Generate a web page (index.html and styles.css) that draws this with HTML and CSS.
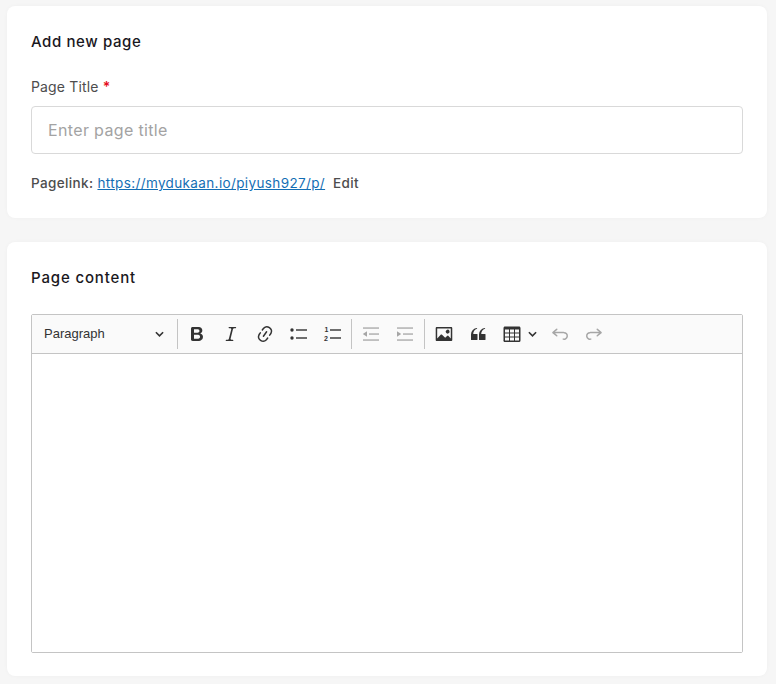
FILE: index.html
```html
<!DOCTYPE html>
<html lang="en">
<head>
  <meta charset="UTF-8">
  <title>Add new page</title>
  <link rel="stylesheet" href="styles.css">
</head>
<body>

  <section class="card card-page">
    <h2 class="card-title">Add new page</h2>
    <label class="field-label" for="page-title">Page Title <span class="required">*</span></label>
    <input class="text-input" id="page-title" type="text" placeholder="Enter page title">
    <p class="pagelink">
      <span>Pagelink:</span>
      <a href="#">https://mydukaan.io/piyush927/p/</a>
      <span class="edit">Edit</span>
    </p>
  </section>

  <section class="card card-content">
    <h2 class="card-title">Page content</h2>

    <div class="editor">
      <div class="toolbar">
        <div class="heading-select">
          <span class="heading-name">Paragraph</span>
          <svg class="chevron" viewBox="0 0 10 6"><path d="M1 1l4 4 4-4" fill="none" stroke="#333" stroke-width="1.8"/></svg>
        </div>
        <span class="sep"></span>

        <button class="tool">
          <svg viewBox="0 0 20 20"><path d="M10.187 17H5.773c-.637 0-1.092-.138-1.364-.415-.273-.277-.409-.718-.409-1.323V4.738c0-.617.14-1.062.419-1.332.279-.27.73-.406 1.354-.406h4.68c.69 0 1.288.041 1.793.124.506.083.96.242 1.36.478.341.197.644.447.906.75a3.262 3.262 0 0 1 .808 2.162c0 1.401-.722 2.426-2.167 3.075C15.05 10.175 16 11.315 16 13.01a3.756 3.756 0 0 1-2.296 3.504 6.1 6.1 0 0 1-1.517.377c-.571.073-1.238.11-2 .11zm-.217-6.217H7v4.087h3.069c1.977 0 2.965-.69 2.965-2.072 0-.707-.256-1.22-.768-1.537-.512-.319-1.277-.478-2.296-.478zM7 5.13v3.619h2.606c.729 0 1.292-.067 1.69-.2a1.6 1.6 0 0 0 .91-.765c.165-.267.247-.566.247-.897 0-.707-.26-1.176-.778-1.409-.519-.232-1.31-.348-2.375-.348H7z"/></svg>
        </button>
        <button class="tool">
          <svg viewBox="0 0 20 20"><path d="m9.586 14.633.021.004c-.036.335.095.655.393.962.082.083.173.15.274.201h1.474a.6.6 0 1 1 0 1.2H5.304a.6.6 0 0 1 0-1.2h1.15c.474-.07.809-.182 1.005-.334.157-.122.291-.32.404-.597l2.416-9.55a1.053 1.053 0 0 0-.281-.823 1.12 1.12 0 0 0-.442-.296H8.15a.6.6 0 0 1 0-1.2h6.443a.6.6 0 1 1 0 1.2h-1.195c-.376.056-.65.155-.823.296-.215.175-.423.439-.623.79l-2.366 9.347z"/></svg>
        </button>
        <button class="tool">
          <svg viewBox="0 0 20 20"><path d="m11.077 15 .991-1.416a.75.75 0 1 1 1.229.86l-1.148 1.64a.748.748 0 0 1-.217.206 5.251 5.251 0 0 1-8.503-5.955.741.741 0 0 1 .12-.274l1.147-1.639a.75.75 0 1 1 1.228.86L4.933 10.7l.006.003a3.75 3.75 0 0 0 6.132 4.294l.006.004zm5.494-5.335a.748.748 0 0 1-.12.274l-1.147 1.639a.75.75 0 1 1-1.228-.86l.86-1.23a3.75 3.75 0 0 0-6.144-4.301l-.86 1.229a.75.75 0 0 1-1.229-.86l1.148-1.64a.748.748 0 0 1 .217-.206 5.251 5.251 0 0 1 8.503 5.955zm-4.563-2.532a.75.75 0 0 1 .184 1.045l-3.155 4.505a.75.75 0 1 1-1.229-.86l3.155-4.506a.75.75 0 0 1 1.045-.184z"/></svg>
        </button>
        <button class="tool">
          <svg viewBox="0 0 20 20"><circle cx="3" cy="6" r="1.7"/><circle cx="3" cy="14" r="1.7"/><rect x="7" y="5.3" width="11" height="1.4"/><rect x="7" y="13.3" width="11" height="1.4"/></svg>
        </button>
        <button class="tool">
          <svg viewBox="0 0 20 20"><text class="num" x="1.4" y="8">1</text><text class="num" x="1" y="17">2</text><rect x="7" y="5.3" width="11" height="1.4"/><rect x="7" y="13.3" width="11" height="1.4"/></svg>
        </button>
        <span class="sep"></span>

        <button class="tool muted">
          <svg viewBox="0 0 20 20"><rect x="2" y="3.4" width="16" height="1.3"/><rect x="8" y="9.4" width="10" height="1.3"/><rect x="2" y="15.4" width="16" height="1.3"/><path d="M6 7.2v5.6L1.8 10z"/></svg>
        </button>
        <button class="tool muted">
          <svg viewBox="0 0 20 20"><rect x="2" y="3.4" width="16" height="1.3"/><rect x="8" y="9.4" width="10" height="1.3"/><rect x="2" y="15.4" width="16" height="1.3"/><path d="M2 7.2v5.6L6.2 10z"/></svg>
        </button>
        <span class="sep"></span>

        <button class="tool">
          <svg viewBox="0 0 20 20"><path d="M6.91 10.54c.26-.23.64-.21.88.03l3.36 3.14 2.23-2.06a.64.64 0 0 1 .87 0l2.52 2.97V4.5H3.2v10.12l3.71-4.08zm10.27-7.51c.6 0 1.09.47 1.09 1.05v11.84c0 .59-.49 1.06-1.09 1.06H2.79c-.6 0-1.09-.47-1.09-1.06V4.08c0-.58.49-1.05 1.1-1.05h14.38zm-5.22 5.56a1.96 1.96 0 1 1 3.4-1.96 1.96 1.96 0 0 1-3.4 1.96z"/></svg>
        </button>
        <button class="tool">
          <svg viewBox="0 0 20 20"><path d="M3 10.423a6.5 6.5 0 0 1 6.056-6.408l.038.67C6.448 5.423 5.354 7.663 5.22 10H9c.552 0 .5.432.5.986v4.511c0 .554-.448.503-1 .503h-5c-.552 0-.5-.449-.5-1.003v-4.574zm8 0a6.5 6.5 0 0 1 6.056-6.408l.038.67c-2.646.739-3.74 2.979-3.873 5.315H17c.552 0 .5.432.5.986v4.511c0 .554-.448.503-1 .503h-5c-.552 0-.5-.449-.5-1.003v-4.574z"/></svg>
        </button>
        <button class="tool tool-table">
          <svg viewBox="0 0 20 20"><path d="M3 5.5v3h4v-3H3zm0 4v3h4v-3H3zm0 4v3h4v-3H3zm5 3h4v-3H8v3zm5 0h4v-3h-4v3zm4-4v-3h-4v3h4zm0-4v-3h-4v3h4zm1.5 8a1.5 1.5 0 0 1-1.5 1.5H3A1.5 1.5 0 0 1 1.5 16V4c0-.828.672-1.5 1.5-1.5h14c.828 0 1.5.672 1.5 1.5v12zM8 5.5v3h4v-3H8zm0 4v3h4v-3H8z"/></svg>
          <svg class="chevron" viewBox="0 0 10 6"><path d="M1 1l4 4 4-4" fill="none" stroke="#333" stroke-width="1.8"/></svg>
        </button>
        <button class="tool muted">
          <svg viewBox="0 0 20 20"><path d="m5.042 9.367 2.189 1.837a.75.75 0 0 1-.965 1.149l-3.788-3.18a.747.747 0 0 1-.21-.284.75.75 0 0 1 .17-.945L6.23 4.762a.75.75 0 1 1 .964 1.15L4.863 7.866h8.917A.75.75 0 0 1 14 7.9a4 4 0 1 1-1.477 7.718l.344-1.489a2.5 2.5 0 1 0 1.094-4.73l.008-.032H5.042z"/></svg>
        </button>
        <button class="tool muted">
          <svg viewBox="0 0 20 20"><path d="m14.958 9.367-2.189 1.837a.75.75 0 0 0 .965 1.149l3.788-3.18a.747.747 0 0 0 .21-.284.75.75 0 0 0-.17-.945L13.77 4.762a.75.75 0 1 0-.964 1.15l2.331 1.955H6.22A.75.75 0 0 0 6 7.9a4 4 0 1 0 1.477 7.718l-.344-1.489A2.5 2.5 0 1 1 6.039 9.4l-.008-.032h8.927z"/></svg>
        </button>
      </div>
      <div class="editor-body"></div>
    </div>
  </section>

</body>
</html>
```

FILE: styles.css
```css
body {
  margin: 0;
  padding: 6px 9px 0 7px;
  height: 684px;
  box-sizing: border-box;
  overflow: hidden;
  background: #f6f6f6;
  font-family: "Inter", "Liberation Sans", sans-serif;
  color: #1a181e;
}

.card {
  background: #fff;
  border-radius: 8px;
  padding: 24px 24px 0;
  box-shadow: 0 0 4px rgba(0, 0, 0, 0.03);
}

.card-page {
  height: 212px;
  box-sizing: border-box;
  margin-bottom: 24px;
}

.card-content {
  height: 434px;
  box-sizing: border-box;
}

.card-title {
  margin: 0;
  font-size: 15px;
  line-height: 24px;
  font-weight: 500;
  letter-spacing: 0.6px;
  color: #1a181e;
}

.card-content .card-title {
  letter-spacing: 0.85px;
}

.field-label {
  display: block;
  margin-top: 23px;
  font-size: 14px;
  line-height: 20px;
  letter-spacing: 0.15px;
  color: #4d4d4d;
}

.required {
  color: #e50b20;
  font-weight: 600;
}

.text-input {
  display: block;
  width: 100%;
  height: 48px;
  box-sizing: border-box;
  margin-top: 9px;
  padding: 0 16px 1px;
  border: 1px solid #d9d9d9;
  border-radius: 4px;
  font-family: inherit;
  font-size: 16px;
  letter-spacing: 0.35px;
  color: #1a181e;
}

.text-input::placeholder {
  color: #a3a3a3;
}

.pagelink {
  margin: 19px 0 0;
  font-size: 13.5px;
  line-height: 20px;
  font-weight: 500;
  letter-spacing: 0.37px;
  color: #4d4d4d;
}

.pagelink a {
  color: #146eb4;
  font-weight: 400;
}

.pagelink .edit {
  margin-left: 4px;
}

.editor {
  margin-top: 24px;
  height: 339px;
  box-sizing: border-box;
  border: 1px solid #c4c4c4;
  border-radius: 2px;
  display: flex;
  flex-direction: column;
}

.toolbar {
  height: 39px;
  flex-shrink: 0;
  box-sizing: border-box;
  border-bottom: 1px solid #c4c4c4;
  background: #fafafa;
  display: flex;
  align-items: center;
}

.heading-select {
  width: 143px;
  box-sizing: border-box;
  padding: 0 11px 0 12px;
  display: flex;
  justify-content: space-between;
  align-items: center;
  font-family: "Liberation Sans", sans-serif;
  font-size: 13px;
  color: #333;
}

.heading-name {
  margin-top: -2px;
}

.sep {
  width: 1px;
  height: 30px;
  margin: 0 2px;
  flex-shrink: 0;
  background: #c4c4c4;
}

.tool {
  width: 33.9px;
  height: 30px;
  flex-shrink: 0;
  padding: 0;
  border: 0;
  background: none;
  display: flex;
  align-items: center;
  justify-content: center;
}

.tool svg {
  width: 20px;
  height: 20px;
  flex-shrink: 0;
  fill: #333;
}

.tool .num {
  font-family: "Liberation Sans", sans-serif;
  font-size: 7px;
  font-weight: 700;
}

.tool.muted svg {
  fill: #a6a6a6;
}

.tool-table {
  width: 48.5px;
  padding-left: 6.5px;
  gap: 6px;
  justify-content: flex-start;
}

.chevron {
  width: 9px;
  height: 6px;
  flex-shrink: 0;
}

.tool .chevron {
  width: 9px;
  height: 6px;
  fill: none;
}

.editor-body {
  flex: 1;
  background: #fff;
}
```
